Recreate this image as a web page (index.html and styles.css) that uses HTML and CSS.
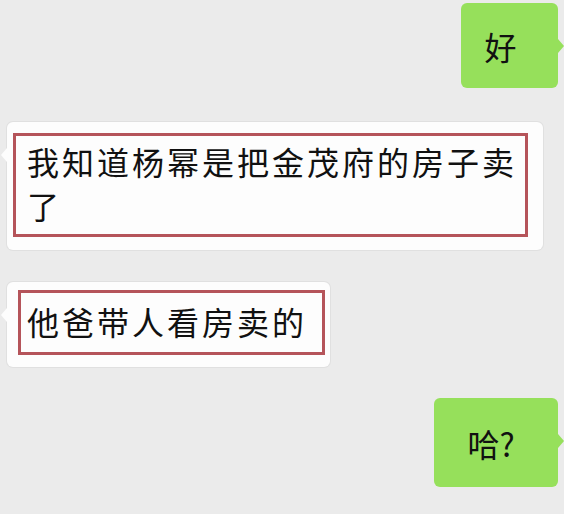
FILE: index.html
```html
<!DOCTYPE html>
<html lang="zh-CN">
<head>
<meta charset="UTF-8">
<meta name="viewport" content="width=device-width, initial-scale=1.0">
<title>聊天记录</title>
    <link rel="stylesheet" href="styles.css">
</head>
<body>
    <div class="chat">
        <!-- 내가 보낸 메시지 -->
        <div class="row me first">
            <div class="bubble green b-hao">好</div>
        </div>
        <div class="row other">
            <div class="bubble white b-long">
                <div class="mark">我知道杨幂是把金茂府的房子卖了</div>
            </div>
        </div>
        <div class="row other">
            <div class="bubble white b-short">
                <div class="mark">他爸带人看房卖的</div>
            </div>
        </div>
        <div class="row me">
            <div class="bubble green b-ha">哈?</div>
        </div>
    </div>
</body>
</html>
```

FILE: styles.css
```css
body{
    margin: 0;
    background: #ebebeb;
    font-family: "Noto Sans CJK SC", "Noto Sans", sans-serif;
    color: #111;
}
.chat{
    width: 564px;
    height: 514px;
    overflow: hidden;
    display: flex;
    flex-direction: column;
}
.row{
    display: flex;
}
.row.me{
    justify-content: flex-end;
    padding-right: 6px;
}
.row.other{
    padding-left: 7px;
}
.first{ margin-top: 3px; }

.bubble{
    position: relative;
    border-radius: 6px;
    font-size: 32px;
    letter-spacing: 3px;
    line-height: 44px;
}
.green{
    background: #96e05b;
    display: flex;
    align-items: center;
    justify-content: center;
}
.green::after{ /* 말풍선 꼬리 */
    content: "";
    position: absolute;
    right: -6px;
    top: 36px;
    border-left: 6px solid #96e05b;
    border-top: 7px solid transparent;
    border-bottom: 7px solid transparent;
}
.white{
    background: #fdfdfd;
    box-shadow: 0 0 0 1px #e0e0e0;
}
.white::before{
    content: "";
    position: absolute;
    left: -6px;
    top: 26px;
    border-right: 6px solid #fdfdfd;
    border-top: 7px solid transparent;
    border-bottom: 7px solid transparent;
}
.mark{
    border: 3px solid #b5545a;
}

.b-hao{
    width: 97px;
    height: 85px;
    padding-right: 18px;
    box-sizing: border-box;
    letter-spacing: 0;
}
.b-long{
    margin-top: 34px;
    width: 536px;
    height: 128px;
    padding: 11px 15px 13px 6px;
    box-sizing: border-box;
}
.b-long .mark{
    height: 104px;
    box-sizing: border-box;
    padding: 3px 0 0 11px;
}
.b-short{
    margin-top: 32px;
    width: 323px;
    height: 85px;
    padding: 8px 5px 12px 11px;
    box-sizing: border-box;
}
.b-short .mark{
    height: 65px;
    box-sizing: border-box;
    padding: 6px 0 0 6px;
}
.b-ha{
    margin-top: 31px;
    width: 124px;
    height: 89px;
    padding-right: 10px;
    box-sizing: border-box;
    letter-spacing: 0;
}
```
